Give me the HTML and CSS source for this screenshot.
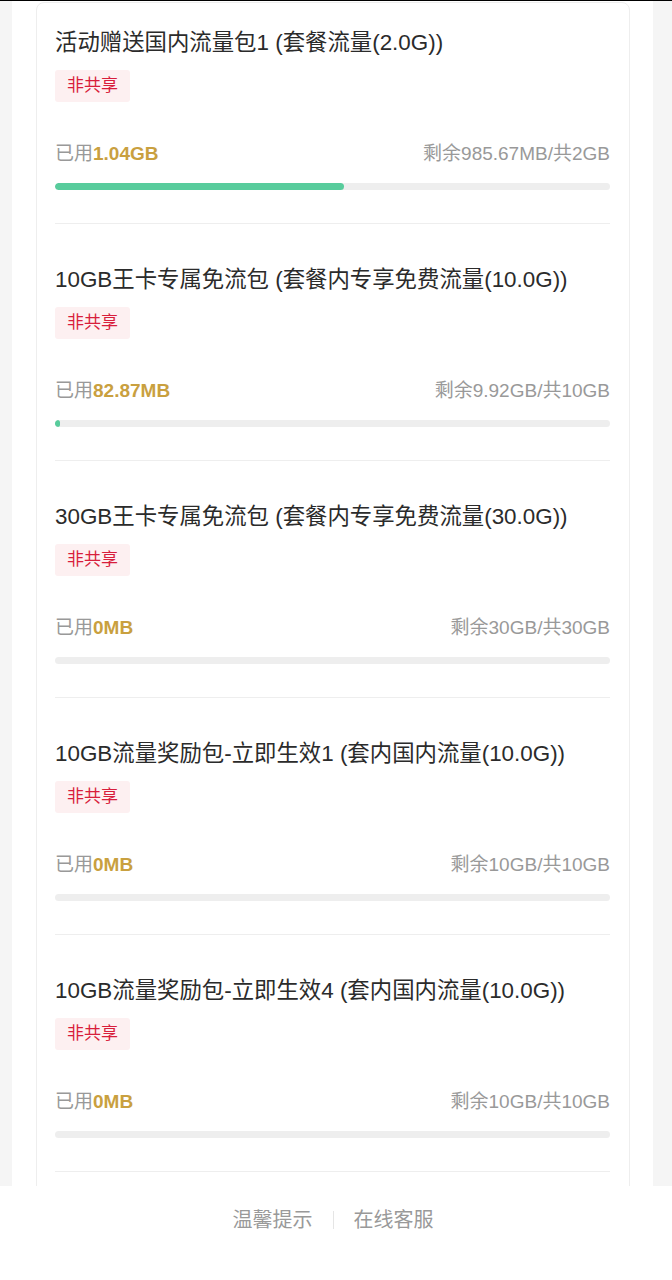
FILE: index.html
```html
<!DOCTYPE html>
<html lang="zh-CN">
<head>
    <meta charset="UTF-8">
    <meta name="viewport" content="width=device-width, initial-scale=1.0">
    <title>流量包详情</title>
    <link rel="stylesheet" href="styles.css">
</head>
<body>
<div class="scroller">
    <div class="page">
        <div class="card">
            <div class="item">
                <h3 class="item-title">活动赠送国内流量包1 (套餐流量(2.0G))</h3>
                <span class="tag">非共享</span>
                <div class="usage">
                    <span class="used">已用<b>1.04GB</b></span>
                    <span class="left">剩余985.67MB/共2GB</span>
                </div>
                <div class="bar"><div class="bar-fill" style="width: 52%"></div></div>
            </div>
            <div class="item">
                <h3 class="item-title">10GB王卡专属免流包 (套餐内专享免费流量(10.0G))</h3>
                <span class="tag">非共享</span>
                <div class="usage">
                    <span class="used">已用<b>82.87MB</b></span>
                    <span class="left">剩余9.92GB/共10GB</span>
                </div>
                <div class="bar"><div class="bar-fill" style="width: 0.81%"></div></div>
            </div>
            <div class="item">
                <h3 class="item-title">30GB王卡专属免流包 (套餐内专享免费流量(30.0G))</h3>
                <span class="tag">非共享</span>
                <div class="usage">
                    <span class="used">已用<b>0MB</b></span>
                    <span class="left">剩余30GB/共30GB</span>
                </div>
                <div class="bar"></div>
            </div>
            <div class="item">
                <h3 class="item-title">10GB流量奖励包-立即生效1 (套内国内流量(10.0G))</h3>
                <span class="tag">非共享</span>
                <div class="usage">
                    <span class="used">已用<b>0MB</b></span>
                    <span class="left">剩余10GB/共10GB</span>
                </div>
                <div class="bar"></div>
            </div>
            <div class="item">
                <h3 class="item-title">10GB流量奖励包-立即生效4 (套内国内流量(10.0G))</h3>
                <span class="tag">非共享</span>
                <div class="usage">
                    <span class="used">已用<b>0MB</b></span>
                    <span class="left">剩余10GB/共10GB</span>
                </div>
                <div class="bar"></div>
            </div>
        </div>
    </div>
</div>
<footer class="footer">
    <a href="#">温馨提示</a>
    <span class="divider"></span>
    <a href="#">在线客服</a>
</footer>
</body>
</html>
```

FILE: styles.css
```css
html, body {
    height: 100%;
}
body {
    display: flex;
    flex-direction: column;
    margin: 0;
    box-sizing: border-box;
    border-top: 1px solid #000;
    background: #fff;
    font-family: "Liberation Sans", "Noto Sans CJK SC", sans-serif;
    color: #333;
}
.scroller {
    flex: 1;
    min-height: 0;
    overflow-y: auto;
    scrollbar-width: none;
    background: #f5f5f5;
}
.page {
    margin: 0 19px 0 12px;
    padding: 1px 23px 0 24px;
    background: #fff;
}
.card {
    border: 1px solid #eee;
    border-radius: 8px;
    padding: 0 19px 40px 18px;
    background: #fff;
}
.item {
    padding: 41px 0 33px;
    border-bottom: 1px solid #eee;
}
.item:first-child {
    padding-top: 25px;
}
.item-title {
    margin: 0;
    font-size: 22.4px;
    font-weight: normal;
    line-height: 30px;
    color: #2b2b2b;
}
.tag {
    display: inline-block;
    margin-top: 12px;
    padding: 0 12px;
    height: 32px;
    line-height: 32px;
    font-size: 17px;
    color: #d81e3c;
    background: #fdf0f1;
    border-radius: 3px;
}
.usage {
    display: flex;
    justify-content: space-between;
    margin-top: 40px;
    font-size: 19px;
    line-height: 24px;
    color: #999;
}
.usage b {
    color: #c9a03f;
    font-weight: bold;
}
.bar {
    margin-top: 17px;
    height: 7px;
    border-radius: 4px;
    background: #eee;
    overflow: hidden;
}
.bar-fill {
    height: 100%;
    min-width: 5px;
    border-radius: 4px;
    background: #58cc9c;
}
.footer {
    flex: none;
    height: 94px;
    box-sizing: border-box;
    padding: 20px 6px 0 0;
    display: flex;
    justify-content: center;
    align-items: flex-start;
    gap: 20px;
    background: #fff;
    font-size: 20px;
    line-height: 28px;
}
.footer a {
    color: #999;
    text-decoration: none;
}
.footer .divider {
    width: 1px;
    height: 18px;
    margin-top: 5px;
    background: #e5e5e5;
}
```
